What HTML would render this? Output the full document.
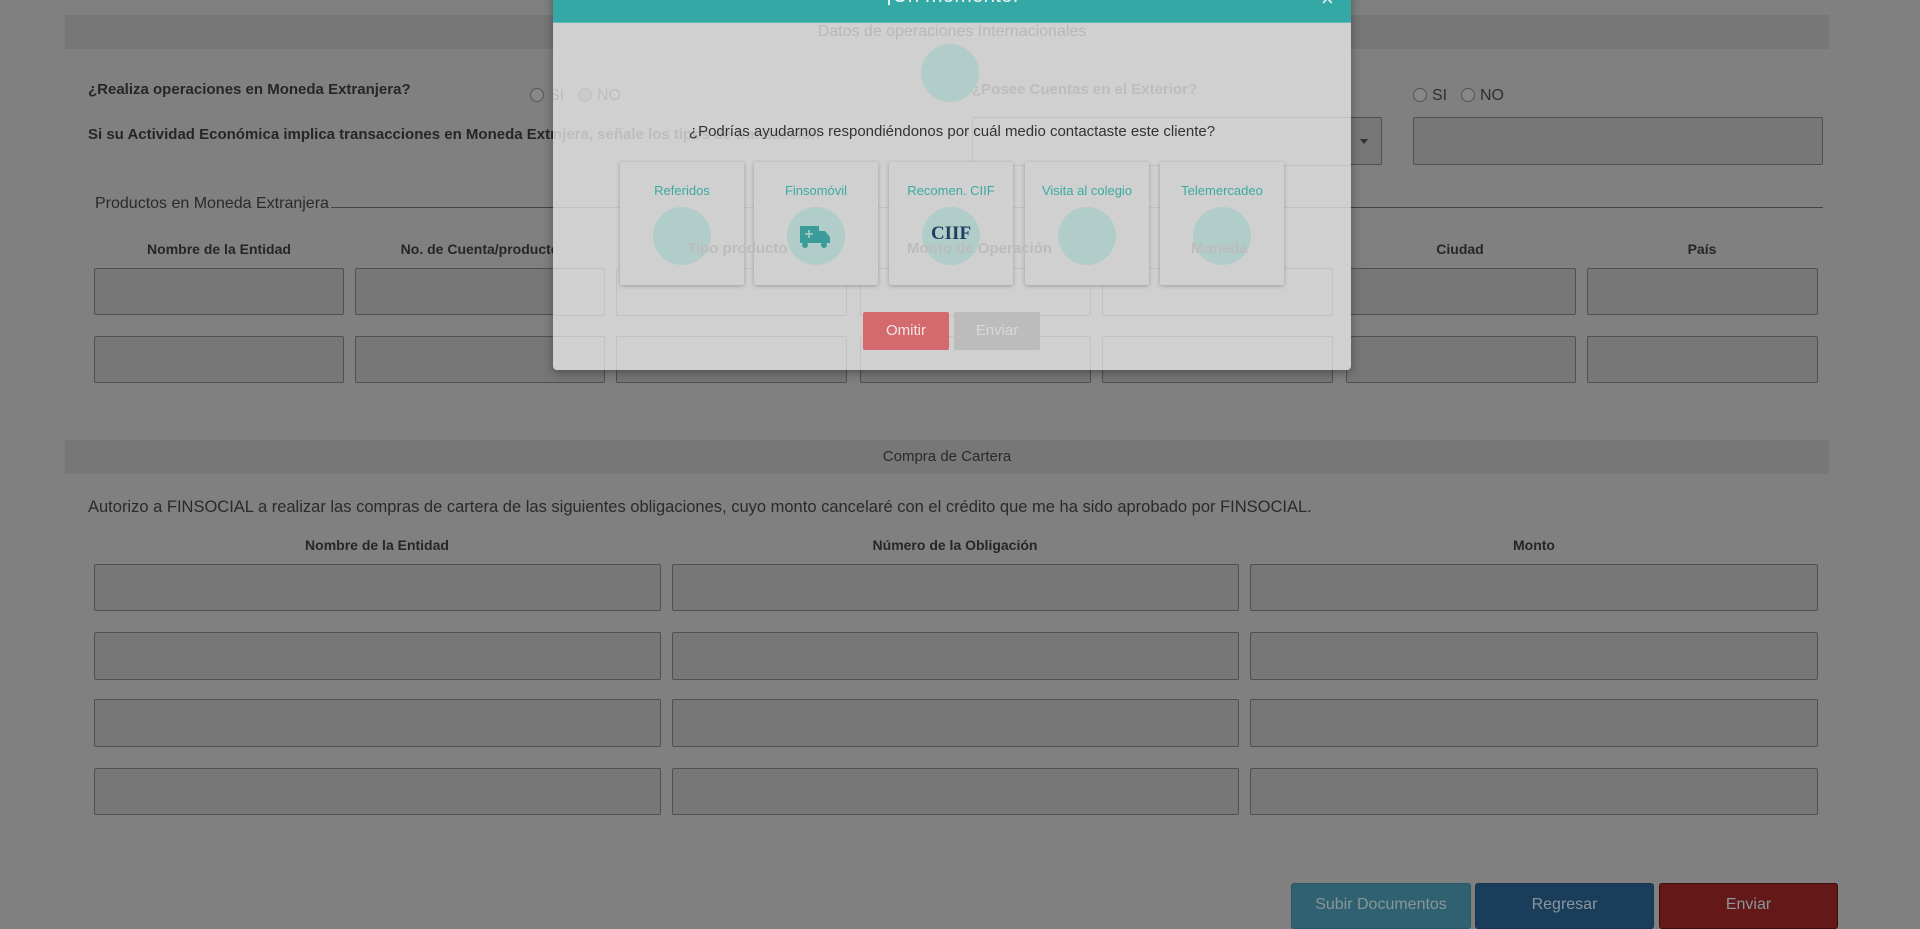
<!DOCTYPE html>
<html><head><meta charset="utf-8">
<style>
*{margin:0;padding:0;box-sizing:border-box}
body{width:1920px;height:925px;overflow:hidden;background:#808080;font-family:"Liberation Sans",sans-serif;position:relative;color:#2e2e2e}
.a{position:absolute}
.bar{background:#777;}
.inp{position:absolute;background:#777;border:1px solid #505050;border-radius:2px}
.b{font-weight:bold;font-size:15px;color:#262626}
.h{position:absolute;font-weight:bold;font-size:14px;color:#262626;transform:translateX(-50%);white-space:nowrap}
.rad{position:absolute;width:14px;height:14px;border-radius:50%;border:1px solid #555;background:#888}
.card{position:absolute;top:162px;width:124px;height:123px;background:#d0d0d0;box-shadow:0 1px 4px rgba(0,0,0,.25);border-radius:2px}
.card .l{position:absolute;top:21px;width:100%;text-align:center;color:#3aaaa4;font-size:13px}
.card .c{position:absolute;top:45px;left:33px;width:58px;height:58px;border-radius:50%;background:#b1cdc9}
.g{position:absolute;color:#bdbdbd;white-space:nowrap}
.gi{position:absolute;border:1px solid #c2c2c2;border-radius:2px}
.btn{position:absolute;top:883px;height:46px;border-radius:3px;color:#8a969c;font-size:16px;text-align:center;line-height:42px}
</style></head><body>
<div class="a bar" style="left:65px;top:15px;width:1764px;height:34px"></div>
<div class="a b" style="left:88px;top:81px">¿Realiza operaciones en Moneda Extranjera?</div>
<div class="a b" style="left:972px;top:81px">¿Posee Cuentas en el Exterior?</div>
<div class="rad" style="left:1413px;top:88px"></div><div class="a" style="left:1432px;top:87px;font-size:16px">SI</div>
<div class="rad" style="left:1461px;top:88px"></div><div class="a" style="left:1480px;top:87px;font-size:16px">NO</div>
<div class="a b" style="left:88px;top:126px">Si su Actividad Económica implica transacciones en Moneda Extranjera, señale los tipos de transacción</div>
<div class="inp" style="left:972px;top:117px;width:410px;height:48px"></div>
<div class="a" style="left:1360px;top:139px;border:4px solid transparent;border-top:5px solid #333"></div>
<div class="inp" style="left:1413px;top:117px;width:410px;height:48px"></div>
<div class="a" style="left:95px;top:195px;font-size:16px;color:#2a2a2a">Productos en Moneda Extranjera</div>
<div class="a" style="left:331px;top:207px;width:1492px;height:1px;background:#444"></div>
<div class="h" style="left:219px;top:241px">Nombre de la Entidad</div>
<div class="h" style="left:480px;top:241px">No. de Cuenta/producto</div>
<div class="h" style="left:1460px;top:241px">Ciudad</div>
<div class="h" style="left:1702px;top:241px">País</div>
<div class="inp" style="left:94px;top:268px;width:250px;height:47px"></div>
<div class="inp" style="left:355px;top:268px;width:250px;height:47px"></div>
<div class="inp" style="left:1346px;top:268px;width:230px;height:47px"></div>
<div class="inp" style="left:1587px;top:268px;width:231px;height:47px"></div>
<div class="inp" style="left:94px;top:336px;width:250px;height:47px"></div>
<div class="inp" style="left:355px;top:336px;width:250px;height:47px"></div>
<div class="inp" style="left:616px;top:336px;width:231px;height:47px"></div>
<div class="inp" style="left:860px;top:336px;width:231px;height:47px"></div>
<div class="inp" style="left:1102px;top:336px;width:231px;height:47px"></div>
<div class="inp" style="left:1346px;top:336px;width:230px;height:47px"></div>
<div class="inp" style="left:1587px;top:336px;width:231px;height:47px"></div>

<div class="a bar" style="left:65px;top:440px;width:1764px;height:34px;text-align:center;line-height:34px;font-size:15px;color:#2a2a2a">Compra de Cartera</div>
<div class="a" style="left:88px;top:498px;font-size:16.5px;color:#2a2a2a">Autorizo a FINSOCIAL a realizar las compras de cartera de las siguientes obligaciones, cuyo monto cancelaré con el crédito que me ha sido aprobado por FINSOCIAL.</div>
<div class="h" style="left:377px;top:537px">Nombre de la Entidad</div>
<div class="h" style="left:955px;top:537px">Número de la Obligación</div>
<div class="h" style="left:1534px;top:537px">Monto</div>
<div class="inp" style="left:94px;top:564px;width:567px;height:47px"></div>
<div class="inp" style="left:672px;top:564px;width:567px;height:47px"></div>
<div class="inp" style="left:1250px;top:564px;width:568px;height:47px"></div>
<div class="inp" style="left:94px;top:632px;width:567px;height:48px"></div>
<div class="inp" style="left:672px;top:632px;width:567px;height:48px"></div>
<div class="inp" style="left:1250px;top:632px;width:568px;height:48px"></div>
<div class="inp" style="left:94px;top:699px;width:567px;height:48px"></div>
<div class="inp" style="left:672px;top:699px;width:567px;height:48px"></div>
<div class="inp" style="left:1250px;top:699px;width:568px;height:48px"></div>
<div class="inp" style="left:94px;top:768px;width:567px;height:47px"></div>
<div class="inp" style="left:672px;top:768px;width:567px;height:47px"></div>
<div class="inp" style="left:1250px;top:768px;width:568px;height:47px"></div>

<div class="btn" style="left:1291px;width:180px;background:#2f6170;border:1px solid #2a5866">Subir Documentos</div>
<div class="btn" style="left:1475px;width:179px;background:#1b3d5c;border:1px solid #173552">Regresar</div>
<div class="btn" style="left:1659px;width:179px;background:#641818;border:1px solid #3a0c0c">Enviar</div>

<div class="rad" style="left:530px;top:88px"></div>

<!-- modal -->
<div class="a" style="left:553px;top:-10px;width:798px;height:380px;background:#d0d0d0;border-radius:4px;box-shadow:0 3px 10px rgba(0,0,0,.35);overflow:hidden">
  <div class="a" style="left:0;top:0;width:798px;height:33px;background:#33a8a5;border-bottom:1px solid #5fbab6"></div>
  <div class="a" style="left:0;top:-6px;width:798px;text-align:center;color:#e8f5f4;font-size:21px">¡Un momento!</div>
  <div class="a" style="left:768px;top:-4px;color:#e8f5f4;font-size:22px">×</div>
  <div class="g" style="left:0;top:33px;width:798px;text-align:center;font-size:16px;color:#b8b8b8">Datos de operaciones Internacionales</div>
  <div class="a" style="left:368px;top:54px;width:58px;height:58px;border-radius:50%;background:#b1cdc9"></div>
  <div class="g" style="left:-4px;top:97px;font-size:16px">SI</div>
  <div class="a" style="left:25px;top:98px;width:14px;height:14px;border-radius:50%;background:#cacaca;border:1px solid #c2c2c2"></div>
  <div class="g" style="left:44px;top:97px;font-size:16px">NO</div>
  <div class="g" style="left:419px;top:91px;font-size:15px;font-weight:bold">¿Posee Cuentas en el Exterior?</div>
  <div class="g" style="left:0;top:136px;font-size:15px;font-weight:bold">njera, señale los tipos de transacción</div>
  <div class="gi" style="left:419px;top:127px;width:400px;height:49px"></div>
  <div class="a" style="left:0;top:217px;width:798px;height:1px;background:#c2c2c2"></div>
  <div class="gi" style="left:-20px;top:278px;width:72px;height:48px"></div>
  <div class="gi" style="left:63px;top:278px;width:231px;height:48px"></div>
  <div class="gi" style="left:307px;top:278px;width:231px;height:48px"></div>
  <div class="gi" style="left:549px;top:278px;width:231px;height:48px"></div>
  <div class="gi" style="left:-20px;top:346px;width:72px;height:48px"></div>
  <div class="gi" style="left:63px;top:346px;width:231px;height:48px"></div>
  <div class="gi" style="left:307px;top:346px;width:231px;height:48px"></div>
  <div class="gi" style="left:549px;top:346px;width:231px;height:48px"></div>
  <div class="a" style="left:0;top:133px;width:798px;text-align:center;font-size:15px;color:#333">¿Podrías ayudarnos respondiéndonos por cuál medio contactaste este cliente?</div>
</div>
<div class="card" style="left:620px"><div class="l">Referidos</div><div class="c"></div></div>
<div class="card" style="left:754px"><div class="l">Finsomóvil</div><div class="c">
<svg width="58" height="58" viewBox="0 0 58 58"><rect x="13" y="19" width="19" height="17" fill="#3c9c9a"/><path d="M32 24h6l5 6v6h-11z" fill="#3c9c9a"/><circle cx="18" cy="38" r="3" fill="#3c9c9a"/><circle cx="37" cy="38" r="3" fill="#3c9c9a"/><path d="M22 23v8M18 27h8" stroke="#b1cdc9" stroke-width="1.5"/></svg></div></div>
<div class="card" style="left:889px"><div class="l">Recomen. CIIF</div><div class="c"><div style="position:absolute;top:16px;width:58px;text-align:center;font-family:'Liberation Serif',serif;font-weight:bold;font-size:19px;color:#1f3f5f">CIIF</div></div></div>
<div class="card" style="left:1025px"><div class="l">Visita al colegio</div><div class="c"></div></div>
<div class="card" style="left:1160px"><div class="l">Telemercadeo</div><div class="c"></div></div>
<div class="g" style="left:687px;top:240px;font-size:15px;font-weight:bold;color:#bcbcbc">Tipo producto</div>
<div class="g" style="left:907px;top:240px;font-size:15px;font-weight:bold;color:#bcbcbc">Monto de Operación</div>
<div class="g" style="left:1191px;top:240px;font-size:15px;font-weight:bold;color:#bcbcbc">Moneda</div>
<div class="a" style="left:863px;top:312px;width:86px;height:38px;background:#d46a6d;border-radius:2px;color:#f2e4e4;font-size:15px;text-align:center;line-height:38px">Omitir</div>
<div class="a" style="left:954px;top:312px;width:86px;height:38px;background:#bcbcbc;border-radius:2px;color:#d8d8d8;font-size:15px;text-align:center;line-height:38px">Enviar</div>
</body></html>
